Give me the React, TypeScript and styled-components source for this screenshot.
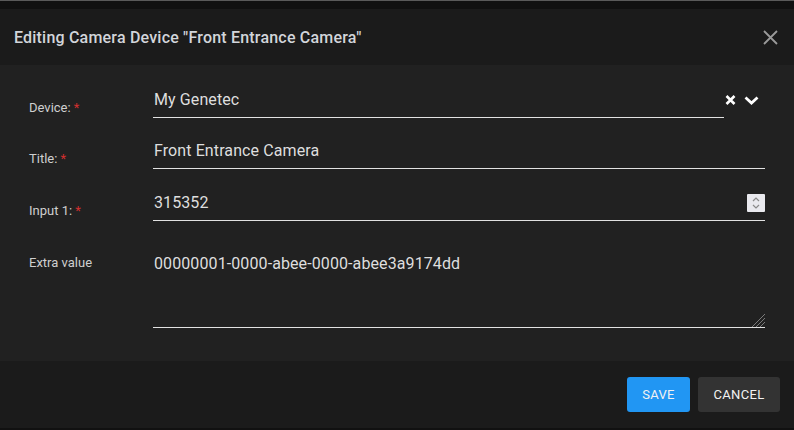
import React from "react";
import styled, { createGlobalStyle } from "styled-components";

const Global = createGlobalStyle`
  html, body { margin: 0; padding: 0; background: #111111; }
  body { font-family: Roboto, "Liberation Sans", Arial, sans-serif; }
  * { box-sizing: border-box; }
`;

const Page = styled.div`
  width: 794px;
  height: 430px;
  border-top: 1px solid #5a5a5a;
  padding-top: 8px;
  background: #111111;
  overflow: hidden;
`;

const Dialog = styled.div`
  width: 794px;
  display: flex;
  flex-direction: column;
`;

const Header = styled.div`
  height: 56px;
  background: #1b1b1b;
  display: flex;
  align-items: center;
  justify-content: space-between;
  padding: 0 16px 0 14px;
`;

const Title = styled.h2`
  margin: 0;
  font-size: 16px;
  font-weight: 500;
  letter-spacing: 0.2px;
  color: #d2d5da;
`;

const CloseButton = styled.button`
  background: none;
  border: none;
  padding: 0;
  width: 15px;
  height: 15px;
  display: flex;
  cursor: pointer;
`;

const Body = styled.div`
  background: #212121;
  height: 296px;
  padding: 21px 29px 0 29px;
  display: flex;
  flex-direction: column;
  gap: 20px;
`;

const Row = styled.div<{ $tight?: boolean }>`
  display: grid;
  grid-template-columns: 124px 1fr;
  align-items: start;
  margin-bottom: ${(p) => (p.$tight ? "-1px" : "0")};
`;

const Label = styled.label`
  font-size: 13px;
  color: #cfcfcf;
  padding-top: 14px;
`;

const Star = styled.span`
  color: #d32f2f;
  margin-left: 3px;
`;

const Field = styled.div`
  height: 32px;
  display: flex;
  align-items: center;
  border-bottom: 1px solid #e2e2e2;
`;

const SelectWrap = styled.div`
  display: flex;
  align-items: center;
  height: 32px;
`;

const SelectField = styled.div`
  flex: 1;
  height: 32px;
  display: flex;
  align-items: center;
  border-bottom: 1px solid #e2e2e2;
`;

const Indicators = styled.div`
  width: 41px;
  display: flex;
  align-items: center;
  justify-content: flex-end;
  gap: 8px;
  padding: 0 6px 4px 0;
`;

const Input = styled.input`
  flex: 1;
  min-width: 0;
  height: 31px;
  background: transparent;
  border: none;
  outline: none;
  padding: 0 0 4px 1px;
  font-family: inherit;
  font-size: 16px;
  letter-spacing: 0.1px;
  color: #dedede;
`;

const Spinner = styled.div`
  width: 18px;
  height: 18px;
  background: #e9e9ee;
  border-radius: 1px;
  display: flex;
  align-items: center;
  justify-content: center;
  margin-bottom: 3px;
`;

const AreaWrap = styled.div`
  position: relative;
  height: 87px;
  border-bottom: 1px solid #e2e2e2;
`;

const TextArea = styled.textarea`
  width: 100%;
  height: 86px;
  display: block;
  background: transparent;
  border: none;
  outline: none;
  resize: none;
  padding: 13px 0 0 1px;
  font-family: inherit;
  font-size: 16px;
  letter-spacing: 0.1px;
  color: #dedede;
`;

const Grip = styled.svg`
  position: absolute;
  right: 0;
  bottom: 0;
`;

const Footer = styled.div`
  background: #1b1b1b;
  height: 67px;
  display: flex;
  align-items: center;
  justify-content: flex-end;
  gap: 8px;
  padding: 0 14px;
`;

const Button = styled.button<{ $primary?: boolean }>`
  height: 35px;
  padding: 0;
  width: ${(p) => (p.$primary ? "63px" : "82px")};
  border: none;
  border-radius: 3px;
  background: ${(p) => (p.$primary ? "#2196f3" : "#333333")};
  color: #f2f2f2;
  font-family: inherit;
  font-size: 13px;
  font-weight: 400;
  letter-spacing: 0.3px;
  text-transform: uppercase;
`;

export default function App() {
  return (
    <>
      <Global />
      <Page>
        <Dialog>
          <Header>
            <Title>Editing Camera Device "Front Entrance Camera"</Title>
            <CloseButton aria-label="close">
              <svg width="15" height="15" viewBox="0 0 15 15">
                <path d="M1 1 L14 14 M14 1 L1 14" stroke="#9a9a9a" strokeWidth="1.8" />
              </svg>
            </CloseButton>
          </Header>
          <Body>
            <Row $tight>
              <Label>
                Device:<Star>*</Star>
              </Label>
              <SelectWrap>
                <SelectField>
                  <Input readOnly value="My Genetec" />
                </SelectField>
                <Indicators>
                  <svg width="11" height="10" viewBox="0 0 11 10">
                    <path d="M1.5 1 L9.5 9 M9.5 1 L1.5 9" stroke="#ffffff" strokeWidth="2.6" />
                  </svg>
                  <svg width="15" height="9" viewBox="0 0 15 9">
                    <path d="M1.5 1.5 L7.5 7 L13.5 1.5" stroke="#ffffff" strokeWidth="2.8" fill="none" />
                  </svg>
                </Indicators>
              </SelectWrap>
            </Row>
            <Row>
              <Label>
                Title:<Star>*</Star>
              </Label>
              <Field>
                <Input readOnly value="Front Entrance Camera" />
              </Field>
            </Row>
            <Row>
              <Label>
                Input 1:<Star>*</Star>
              </Label>
              <Field>
                <Input readOnly value="315352" />
                <Spinner>
                  <svg width="10" height="14" viewBox="0 0 10 14">
                    <path d="M2 5 L5 2 L8 5" stroke="#8a8a8a" strokeWidth="1.2" fill="none" />
                    <path d="M2 9 L5 12 L8 9" stroke="#8a8a8a" strokeWidth="1.2" fill="none" />
                  </svg>
                </Spinner>
              </Field>
            </Row>
            <Row>
              <Label>Extra value</Label>
              <AreaWrap>
                <TextArea readOnly value="00000001-0000-abee-0000-abee3a9174dd" />
                <Grip width="14" height="14" viewBox="0 0 14 14">
                  <path d="M14 1 L1 14 M14 5 L5 14 M14 9 L9 14" stroke="#7a7a7a" strokeWidth="1" />
                </Grip>
              </AreaWrap>
            </Row>
          </Body>
          <Footer>
            <Button $primary>Save</Button>
            <Button>Cancel</Button>
          </Footer>
        </Dialog>
      </Page>
    </>
  );
}
